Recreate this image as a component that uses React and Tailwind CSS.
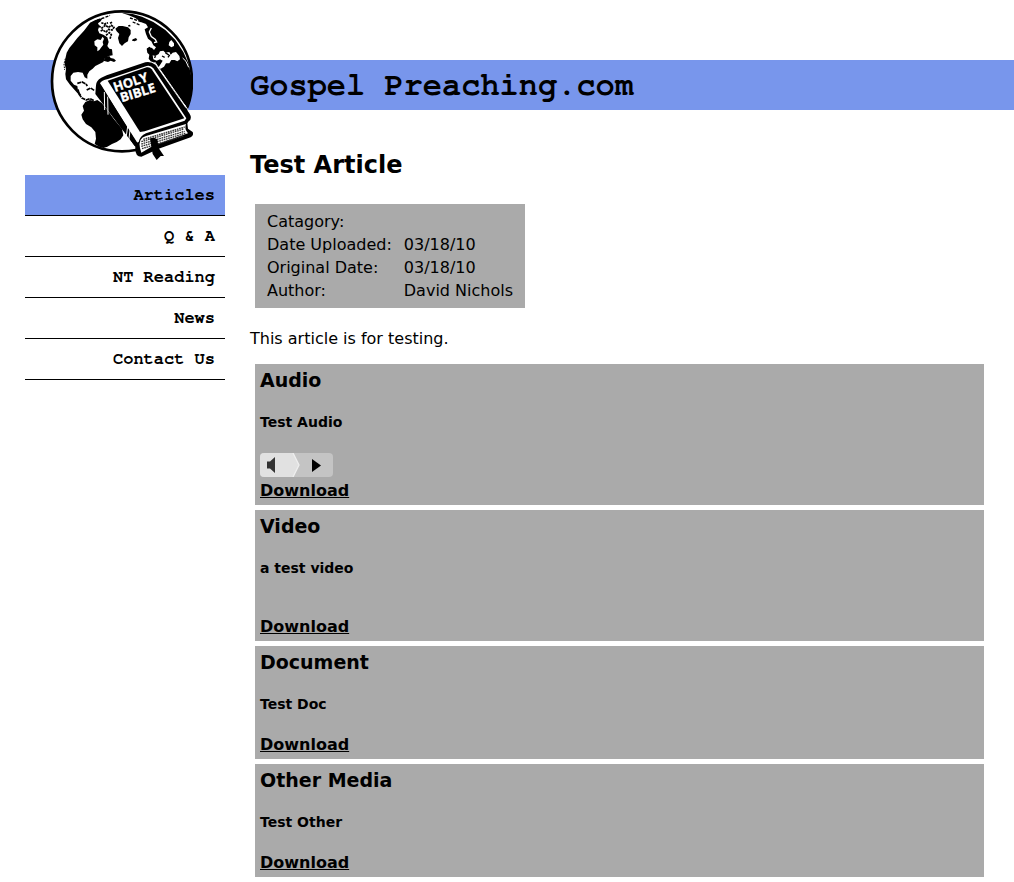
import React from "react";

const navItems = ["Articles", "Q & A", "NT Reading", "News", "Contact Us"];

const details = [
  ["Catagory:", ""],
  ["Date Uploaded:", "03/18/10"],
  ["Original Date:", "03/18/10"],
  ["Author:", "David Nichols"],
];

const mono =
  "font-['Courier_10_Pitch','Nimbus_Mono_PS','FreeMono','Courier_New','Liberation_Mono',monospace] font-bold";

function Logo() {
  return (
    <svg viewBox="30 30 429 450" className="h-[150px] w-[143px]" role="img" aria-label="Globe with a Holy Bible">
      <circle cx="246" cy="244" r="210" fill="#fff" stroke="#000" strokeWidth="8" />
      {/* North America */}
      <path d="M140 82 L150 68 L166 60 L188 54 L182 64 L174 70 L178 78 L174 90 L178 100 L190 104 L202 112 L206 126 L202 138 L208 146 L216 148 L218 166 L206 168 L194 176 L190 186 L178 192 L166 198 L158 206 L148 214 L142 224 L142 236 L134 232 L128 218 L114 216 L100 218 L92 228 L92 242 L102 254 L112 258 L114 272 L124 284 L118 286 L104 270 L90 254 L78 238 L76 222 L78 208 L74 192 L76 176 L80 158 L88 144 L98 132 L112 114 L132 92 Z" />
      <path d="M163 124 L172 118 L182 120 L188 110 L192 116 L188 126 L190 134 L184 142 L178 150 L172 154 L172 142 L164 136 Z" fill="#fff" />
      <path d="M76 176 L72 192 L74 210" fill="none" stroke="#000" strokeWidth="3" strokeDasharray="5 3" />
      {/* Arctic islands */}
      <path d="M176 78 L186 84 L196 76 L206 82 L214 76 L222 82 L216 90 L206 88 L198 96 L188 90 L180 94 M198 106 L208 98 L214 104 L210 116 M184 68 L194 72 L204 68 M210 70 L218 66" fill="none" stroke="#000" strokeWidth="5" strokeDasharray="7 2" />
      <path d="M190 182 L198 170 L208 168 L212 174 L222 176 L228 182 L222 186 L212 182 L204 186 Z" />
      {/* Greenland and Iceland */}
      <path d="M226 86 L236 78 L248 78 L264 82 L272 90 L272 102 L266 112 L264 124 L254 130 L246 138 L238 130 L234 114 L238 102 L230 94 Z" />
      <path d="M278 118 L288 114 L292 120 L284 124 L276 122 Z M264 76 L270 74 L272 79 L266 80 Z" />
      <path d="M172 60 L190 54 L210 46 M270 54 L288 60 L306 66 M278 66 L302 76" fill="none" stroke="#000" strokeWidth="4" strokeDasharray="9 4" />
      {/* Europe, Africa and Asia */}
      <path d="M244 38 L278 42 L306 50 L340 66 L376 90 L406 120 L430 156 L446 192 L454 230 L454 270 L444 324 L430 310 L408 280 L388 250 L372 226 L356 204 L344 188 L332 184 L326 176 L328 164 L322 158 L320 146 L328 140 L336 144 L342 150 L348 142 L340 136 L334 124 L324 116 L318 102 L314 88 L324 82 L318 72 L302 66 L286 54 L266 46 Z" />
      <path d="M338 166 L346 168 L356 162 L360 154 L370 152 L376 158 L388 156 L392 164 L398 158 L408 156 L418 168 L420 178 L412 184 L404 180 L394 180 L388 190 L378 190 L372 200 L362 206 L354 204 L362 192 L368 182 L360 178 L350 182 L340 178 Z M388 126 L394 120 L402 130 L402 138 L394 142 L386 136 Z" fill="#fff" />
      <path d="M334 84 L328 96 L334 110 L346 118 L350 126 L342 128 M314 130 L326 130 L334 142" fill="none" stroke="#fff" strokeWidth="4" />
      <path d="M376 158 L388 166 L384 172 M366 168 L374 172 M322 146 L332 152 M342 172 L348 170" fill="none" stroke="#000" strokeWidth="4" />
      <path d="M428 174 L438 184 L446 202" fill="none" stroke="#fff" strokeWidth="3" />
      {/* Central America and the Caribbean */}
      <path d="M112 250 L126 246 L138 252 L142 258 M140 270 L152 264 L164 272 M114 268 L118 284 L126 294 L138 300 L150 296 L162 302" fill="none" stroke="#000" strokeWidth="5" strokeDasharray="12 2" />
      {/* South America */}
      <path d="M128 318 L136 306 L150 300 L162 304 L172 300 L186 310 L202 330 L222 358 L246 386 L250 406 L242 418 L230 426 L216 432 L202 440 L190 444 L178 440 L164 432 L168 416 L166 396 L154 382 L138 372 L128 358 L124 344 L132 332 Z" />
      {/* Bible cover and spine */}
      <path d="M168 256 Q168 242 184 233 L200 226 L316 187 Q334 184 346 194 L368 226 L448 340 Q458 356 446 364 L442 370 L444 386 L458 396 Q462 406 452 412 L356 446 L304 470 Q284 470 286 440 L166 282 Z" />
      <path d="M344 186 L358 206 L450 338" fill="none" stroke="#fff" strokeWidth="3" />
      <path d="M180 250 Q184 241 204 237 L320 198 Q332 195 340 205 L439 355 L434 362 L318 400 Q300 408 296 426 L290 428 L184 256 Z" fill="#fff" />
      <path d="M203 242 L320 202 Q329 200 335 208 L433 355 L314 394 L300 396 Z" />
      <path d="M182 256 L292 428 L284 438 L172 282 Q172 266 182 256 Z" />
      <path d="M193 276 L194 330 M203 290 L204 344 M264 372 L258 415 M271 382 L266 424" fill="none" stroke="#fff" strokeWidth="3" />
      {/* Page block */}
      <path d="M300 444 Q294 414 318 408 L438 372 Q432 386 444 400 L342 436 L304 458 Z" fill="#fff" />
      <path d="M310 418 L434 381 M304 425 L432 387 M304 432 L434 394 M304 439 L436 400 M306 446 L430 408" fill="none" stroke="#333" strokeWidth="4" strokeDasharray="5 2" />
      {/* Ribbon */}
      <path d="M330 416 Q342 410 352 418 L356 444 L372 468 L362 468 L350 480 L338 462 L334 438 Z" />
      <g fill="#fff" stroke="#fff" strokeWidth="1" fontFamily="'Open Sans', 'Noto Sans', sans-serif" fontWeight="700" fontSize="39">
        <text transform="translate(225 276) rotate(-18)">HOLY</text>
        <text transform="translate(245 307) rotate(-17)">BIBLE</text>
      </g>
    </svg>
  );
}

function Player() {
  return (
    <button type="button" aria-label="Play Test Audio" className="mt-[23px] mb-1 block h-6">
      <svg viewBox="0 0 73 24" className="h-6 w-[73px]" aria-hidden="true">
        <rect width="73" height="24" rx="4" fill="#c4c4c4" />
        <path d="M4 0H33L39 12L33 24H4Q0 24 0 20V4Q0 0 4 0Z" fill="#e1e1e1" />
        <path d="M33 0L39 12L33 24" fill="none" stroke="#eee" strokeWidth="1.3" />
        <path d="M7 8.5H10L15 4V20L10 15.5H7Z" fill="#333" />
        <path d="M52 6V19L61 12.5Z" fill="#000" />
      </svg>
    </button>
  );
}

function Media({ title, name, children }) {
  return (
    <section className="bg-[#aaa] p-[5px]">
      <h3 className="text-[19px] leading-[22px] font-bold">{title}</h3>
      <h4 className="mt-6 text-[14px] leading-[15px] font-bold">{name}</h4>
      {children}
    </section>
  );
}

function Download({ className = "" }) {
  return (
    <div className={className}>
      <a href="#download" className="block w-fit leading-[19px] font-bold underline">Download</a>
    </div>
  );
}

export default function App() {
  return (
    <div className="bg-white pt-[60px] pb-[5px] font-['DejaVu_Sans',sans-serif] text-base text-black">
      <header className="relative flex h-[50px] items-center bg-[#7896ec] pl-[250px]">
        <a href="#home" className="absolute -top-[50px] left-[50px]">
          <Logo />
        </a>
        <h1 className={`${mono} text-[32px] leading-9`}>Gospel Preaching.com</h1>
      </header>
      <div className="flex items-start">
        <nav className="mt-[65px] ml-[25px] w-[200px] shrink-0">
          <ul>
            {navItems.map((item, i) => (
              <li key={item} className={i === 0 ? "border-b border-black bg-[#7896ec]" : "border-b border-black"}>
                <a href="#nav" className={`${mono} block pr-2.5 text-right text-[17px] leading-10`}>{item}</a>
              </li>
            ))}
          </ul>
        </nav>
        <main className="mt-10 mr-[30px] ml-[25px] min-w-0 flex-1">
          <h2 className="text-2xl leading-[30px] font-bold">Test Article</h2>
          <table className="mt-6 ml-[5px] border-separate border-spacing-0 bg-[#aaa] p-1.5">
            <tbody>
              {details.map(([label, value]) => (
                <tr key={label}>
                  <th scope="row" className="px-1.5 text-left leading-[23px] font-normal">{label}</th>
                  <td className="px-1.5 leading-[23px]">{value}</td>
                </tr>
              ))}
            </tbody>
          </table>
          <p className="mt-5 leading-[22px]">This article is for testing.</p>
          <div className="mt-3.5 ml-[5px] flex flex-col gap-[5px]">
            <Media title="Audio" name="Test Audio">
              <Player />
              <Download />
            </Media>
            <Media title="Video" name="a test video">
              <Download className="mt-[41px]" />
            </Media>
            <Media title="Document" name="Test Doc">
              <Download className="mt-[23px]" />
            </Media>
            <Media title="Other Media" name="Test Other">
              <Download className="mt-[23px]" />
            </Media>
          </div>
        </main>
      </div>
    </div>
  );
}
